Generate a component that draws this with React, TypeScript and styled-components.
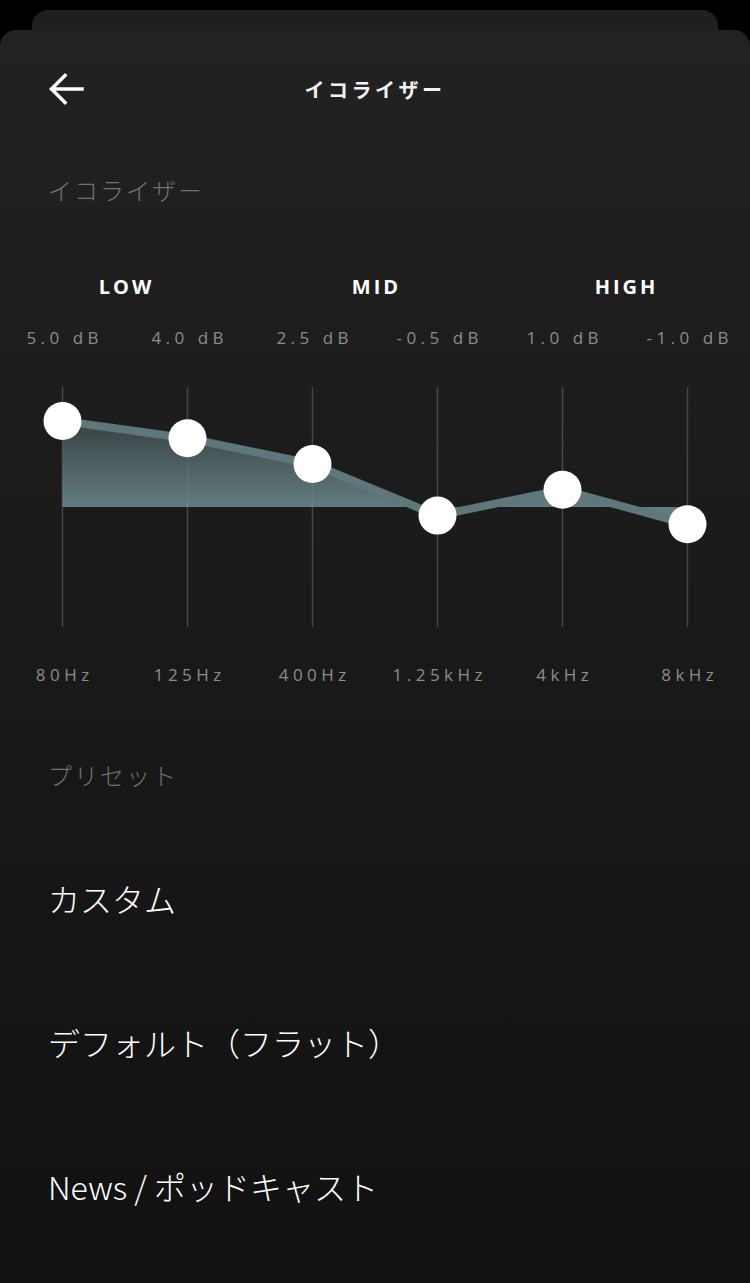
import React from 'react';
import styled, { createGlobalStyle } from 'styled-components';

const GlobalStyle = createGlobalStyle`
  html, body {
    margin: 0;
    padding: 0;
    background: #000;
  }
  body {
    font-family: "Open Sans", "Noto Sans CJK JP", sans-serif;
    -webkit-font-smoothing: antialiased;
  }
`;

const JP = `"Noto Sans CJK JP", "Noto Sans", sans-serif`;

const Page = styled.div`
  width: 750px;
  min-height: 1283px;
  background: #000;
  padding-top: 10px;
  box-sizing: border-box;
  display: flex;
  flex-direction: column;
`;

const BackCard = styled.div`
  height: 20px;
  margin: 0 32px;
  background: #1f1f1f;
  border-radius: 16px 16px 0 0;
`;

const Sheet = styled.div`
  flex: 1;
  background: linear-gradient(180deg, #222222 0%, #1b1b1b 40%, #111111 100%);
  border-radius: 16px 16px 0 0;
  display: flex;
  flex-direction: column;
`;

const Header = styled.div`
  height: 118px;
  display: grid;
  grid-template-columns: 1fr auto 1fr;
  align-items: center;
`;

const BackButton = styled.button`
  justify-self: start;
  margin-left: 48px;
  width: 36px;
  height: 36px;
  padding: 0;
  border: none;
  background: transparent;
  display: flex;
  align-items: center;
  justify-content: center;
`;

const Title = styled.h1`
  margin: 0;
  font-family: ${JP};
  font-size: 20px;
  font-weight: 700;
  letter-spacing: 3.5px;
  color: #f2f2f2;
`;

const SectionLabel = styled.div<{ $top: number }>`
  margin-top: ${p => p.$top}px;
  padding-left: 48px;
  font-family: ${JP};
  font-size: 24px;
  line-height: 34px;
  font-weight: 300;
  letter-spacing: 2px;
  color: #727272;
`;

const BandRow = styled.div`
  margin-top: 66px;
  display: grid;
  grid-template-columns: repeat(3, 1fr);
`;

const BandLabel = styled.div`
  text-align: center;
  font-size: 20px;
  line-height: 28px;
  font-weight: 700;
  letter-spacing: 3px;
  padding-left: 3px;
  color: #fff;
`;

const ValueRow = styled.div<{ $top: number }>`
  margin-top: ${p => p.$top}px;
  display: grid;
  grid-template-columns: repeat(6, 1fr);
`;

const ValueLabel = styled.div`
  text-align: center;
  font-size: 17px;
  line-height: 24px;
  letter-spacing: 4.5px;
  padding-left: 4.5px;
  color: #8c8c8c;
  white-space: nowrap;
`;

const Chart = styled.svg`
  display: block;
  margin-top: 17px;
`;

const PresetList = styled.div`
  margin-top: 34px;
  display: flex;
  flex-direction: column;
`;

const PresetItem = styled.div`
  height: 144px;
  display: flex;
  align-items: center;
  padding-left: 48px;
  font-family: ${JP};
  font-size: 32px;
  font-weight: 300;
  color: #fff;
`;

const bands = [
  { db: 5.0, freq: '80Hz' },
  { db: 4.0, freq: '125Hz' },
  { db: 2.5, freq: '400Hz' },
  { db: -0.5, freq: '1.25kHz' },
  { db: 1.0, freq: '4kHz' },
  { db: -1.0, freq: '8kHz' },
];

const formatDb = (v: number) => `${v.toFixed(1)} dB`;

const CHART_H = 280;
const BASE = 140;
const PX_PER_DB = 17.2;

const EqChart: React.FC = () => {
  const pts = bands.map((b, i) => ({ x: 62.5 + 125 * i, y: BASE - b.db * PX_PER_DB }));
  const line = pts.map(p => `${p.x},${p.y}`).join(' ');
  const area = `${line} ${pts[pts.length - 1].x},${BASE} ${pts[0].x},${BASE}`;
  return (
    <Chart width={750} height={CHART_H} viewBox={`0 0 750 ${CHART_H}`}>
      <defs>
        <linearGradient id="eqFill" x1="0" y1="50" x2="0" y2={BASE} gradientUnits="userSpaceOnUse">
          <stop offset="0" stopColor="#363f41" />
          <stop offset="1" stopColor="#617c7f" />
        </linearGradient>
      </defs>
      {pts.map(p => (
        <line key={`g${p.x}`} x1={p.x} x2={p.x} y1={20} y2={260} stroke="#383838" strokeWidth={1.5} />
      ))}
      <polygon points={area} fill="url(#eqFill)" />
      <polyline points={line} fill="none" stroke="#5d777a" strokeWidth={8} strokeLinejoin="round" />
      {pts.map(p => (
        <line key={`o${p.x}`} x1={p.x} x2={p.x} y1={20} y2={260} stroke="rgba(255,255,255,0.07)" strokeWidth={1.5} />
      ))}
      {pts.map(p => (
        <circle key={`k${p.x}`} cx={p.x} cy={p.y} r={19} fill="#fff" />
      ))}
    </Chart>
  );
};

const App: React.FC = () => (
  <>
    <GlobalStyle />
    <Page>
      <BackCard />
      <Sheet>
        <Header>
          <BackButton aria-label="back">
            <svg width="36" height="36" viewBox="0 0 36 36">
              <path d="M34 18H4M17 4.5L3.5 18L17 31.5" fill="none" stroke="#fff" strokeWidth="3.5" strokeLinecap="square" />
            </svg>
          </BackButton>
          <Title>イコライザー</Title>
          <span />
        </Header>
        <SectionLabel $top={25}>イコライザー</SectionLabel>
        <BandRow>
          <BandLabel>LOW</BandLabel>
          <BandLabel>MID</BandLabel>
          <BandLabel>HIGH</BandLabel>
        </BandRow>
        <ValueRow $top={25}>
          {bands.map(b => (
            <ValueLabel key={b.freq}>{formatDb(b.db)}</ValueLabel>
          ))}
        </ValueRow>
        <EqChart />
        <ValueRow $top={16}>
          {bands.map(b => (
            <ValueLabel key={b.freq}>{b.freq}</ValueLabel>
          ))}
        </ValueRow>
        <SectionLabel $top={71}>プリセット</SectionLabel>
        <PresetList>
          <PresetItem>カスタム</PresetItem>
          <PresetItem>デフォルト（フラット）</PresetItem>
          <PresetItem>News / ポッドキャスト</PresetItem>
        </PresetList>
      </Sheet>
    </Page>
  </>
);

export default App;
